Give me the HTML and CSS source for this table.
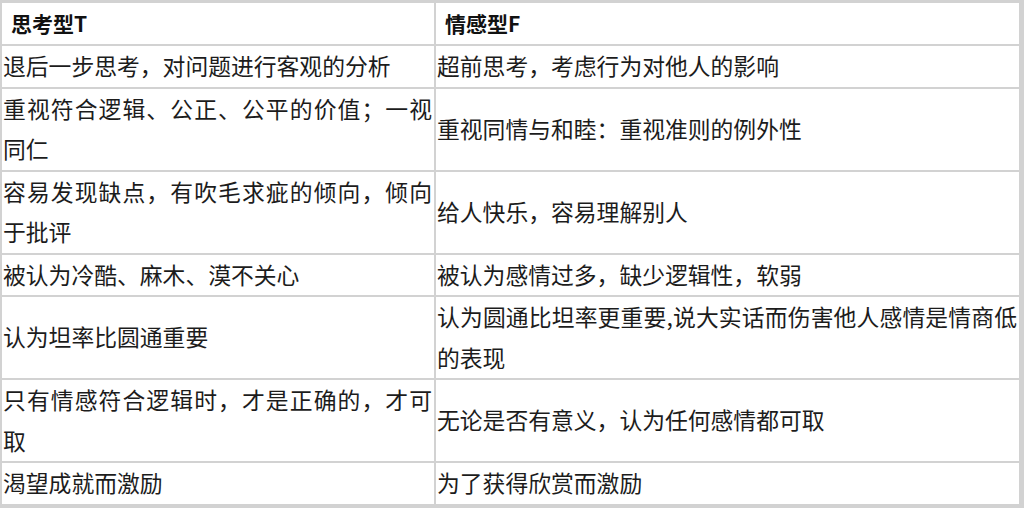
FILE: index.html
```html
<!DOCTYPE html>
<html lang="zh-CN">
<head>
<meta charset="utf-8">
<title>思考型T 与 情感型F</title>
<link rel="stylesheet" href="styles.css">
</head>
<body>
<table class="compare">
  <colgroup>
    <col class="col-t">
    <col class="col-f">
  </colgroup>
  <thead>
    <tr>
      <th>思考型T</th>
      <th>情感型F</th>
    </tr>
  </thead>
  <tbody>
    <tr>
      <td>退后一步思考，对问题进行客观的分析</td>
      <td>超前思考，考虑行为对他人的影响</td>
    </tr>
    <tr>
      <td>重视符合逻辑、公正、公平的价值；一视同仁</td>
      <td>重视同情与和睦：重视准则的例外性</td>
    </tr>
    <tr>
      <td>容易发现缺点，有吹毛求疵的倾向，倾向于批评</td>
      <td>给人快乐，容易理解别人</td>
    </tr>
    <tr>
      <td>被认为冷酷、麻木、漠不关心</td>
      <td>被认为感情过多，缺少逻辑性，软弱</td>
    </tr>
    <tr>
      <td>认为坦率比圆通重要</td>
      <td>认为圆通比坦率更重要,说大实话而伤害他人感情是情商低的表现</td>
    </tr>
    <tr>
      <td>只有情感符合逻辑时，才是正确的，才可取</td>
      <td>无论是否有意义，认为任何感情都可取</td>
    </tr>
    <tr>
      <td>渴望成就而激励</td>
      <td>为了获得欣赏而激励</td>
    </tr>
  </tbody>
</table>
</body>
</html>
```

FILE: styles.css
```css
html, body {
  margin: 0;
  padding: 0;
  background: #d2d2d2;
  height: 100%;
  overflow: hidden;
}

.compare {
  width: calc(100% - 3px);
  margin: 1px 3px 0 0;
  table-layout: fixed;
  border-collapse: separate;
  border-spacing: 2px;
  font-family: "Noto Sans CJK SC", "Noto Sans", sans-serif;
  color: #1c1c1c;
}

.col-t {
  width: 432px;
}

.compare th,
.compare td {
  background: #ffffff;
  vertical-align: middle;
}

.compare th {
  height: 41px;
  padding: 0 9px;
  font-size: 21px;
  font-weight: 700;
  text-align: left;
  color: #111;
  line-height: 41px;
}

.compare td {
  padding: 0 2px 0 1px;
  font-size: 22.8px;
  line-height: 40.5px;
  text-align: justify;
}
```
